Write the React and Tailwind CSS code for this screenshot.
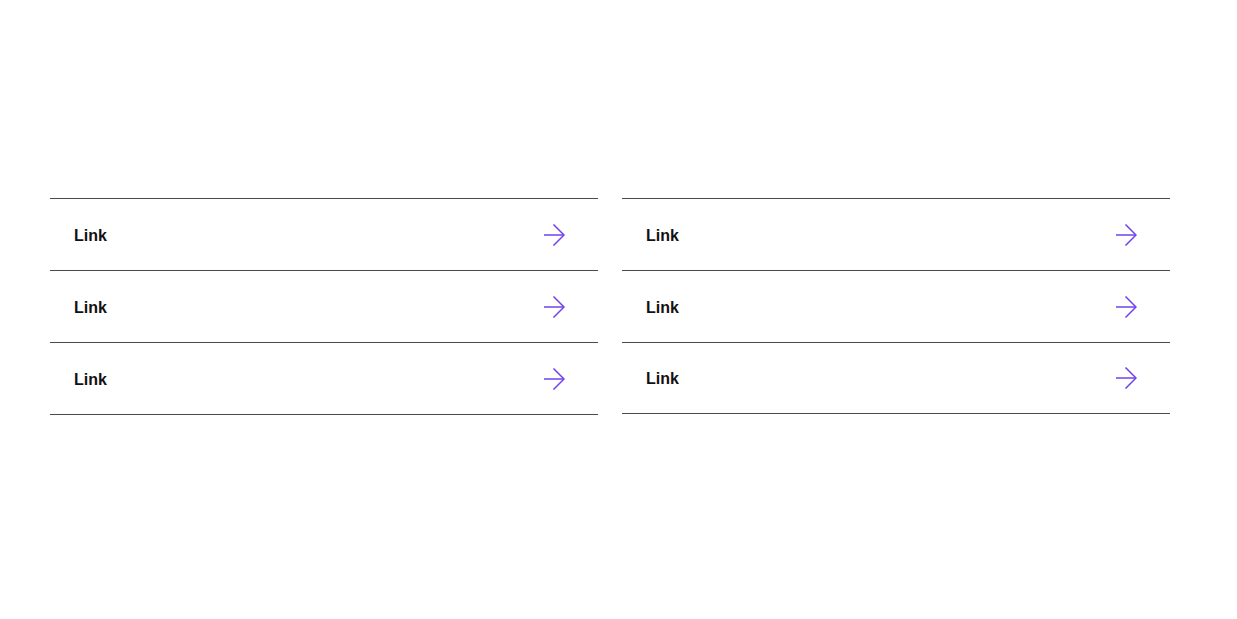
export default function App() {
  const Arrow = () => (
    <svg width="22" height="22" viewBox="0 0 22 22" fill="none" stroke="#6f42ee" strokeWidth="1.5" strokeLinecap="butt" strokeLinejoin="miter">
      <path d="M1 11H21" />
      <path d="M10.5 0.5L21 11L10.5 21.5" />
    </svg>
  );
  const List = ({ short }) => (
    <div className="flex-1 border-t border-[#4a4a4a]">
      {[0, 1, 2].map((i) => (
        <a key={i} href="#" className={`flex items-center justify-between border-b border-[#4a4a4a] pl-6 pr-[33px] ${short && i === 2 ? "h-[71px]" : "h-[72px]"}`}>
          <span className="mt-[2px] text-[16px] font-bold text-[#111]" style={{ fontFamily: '"Liberation Sans", Arial, sans-serif' }}>Link</span>
          <Arrow />
        </a>
      ))}
    </div>
  );
  return (
    <div className="min-h-[619px] bg-white pt-[198px] pl-[50px] pr-[67px]">
      <div className="flex gap-6">
        <List />
        <List short />
      </div>
    </div>
  );
}
